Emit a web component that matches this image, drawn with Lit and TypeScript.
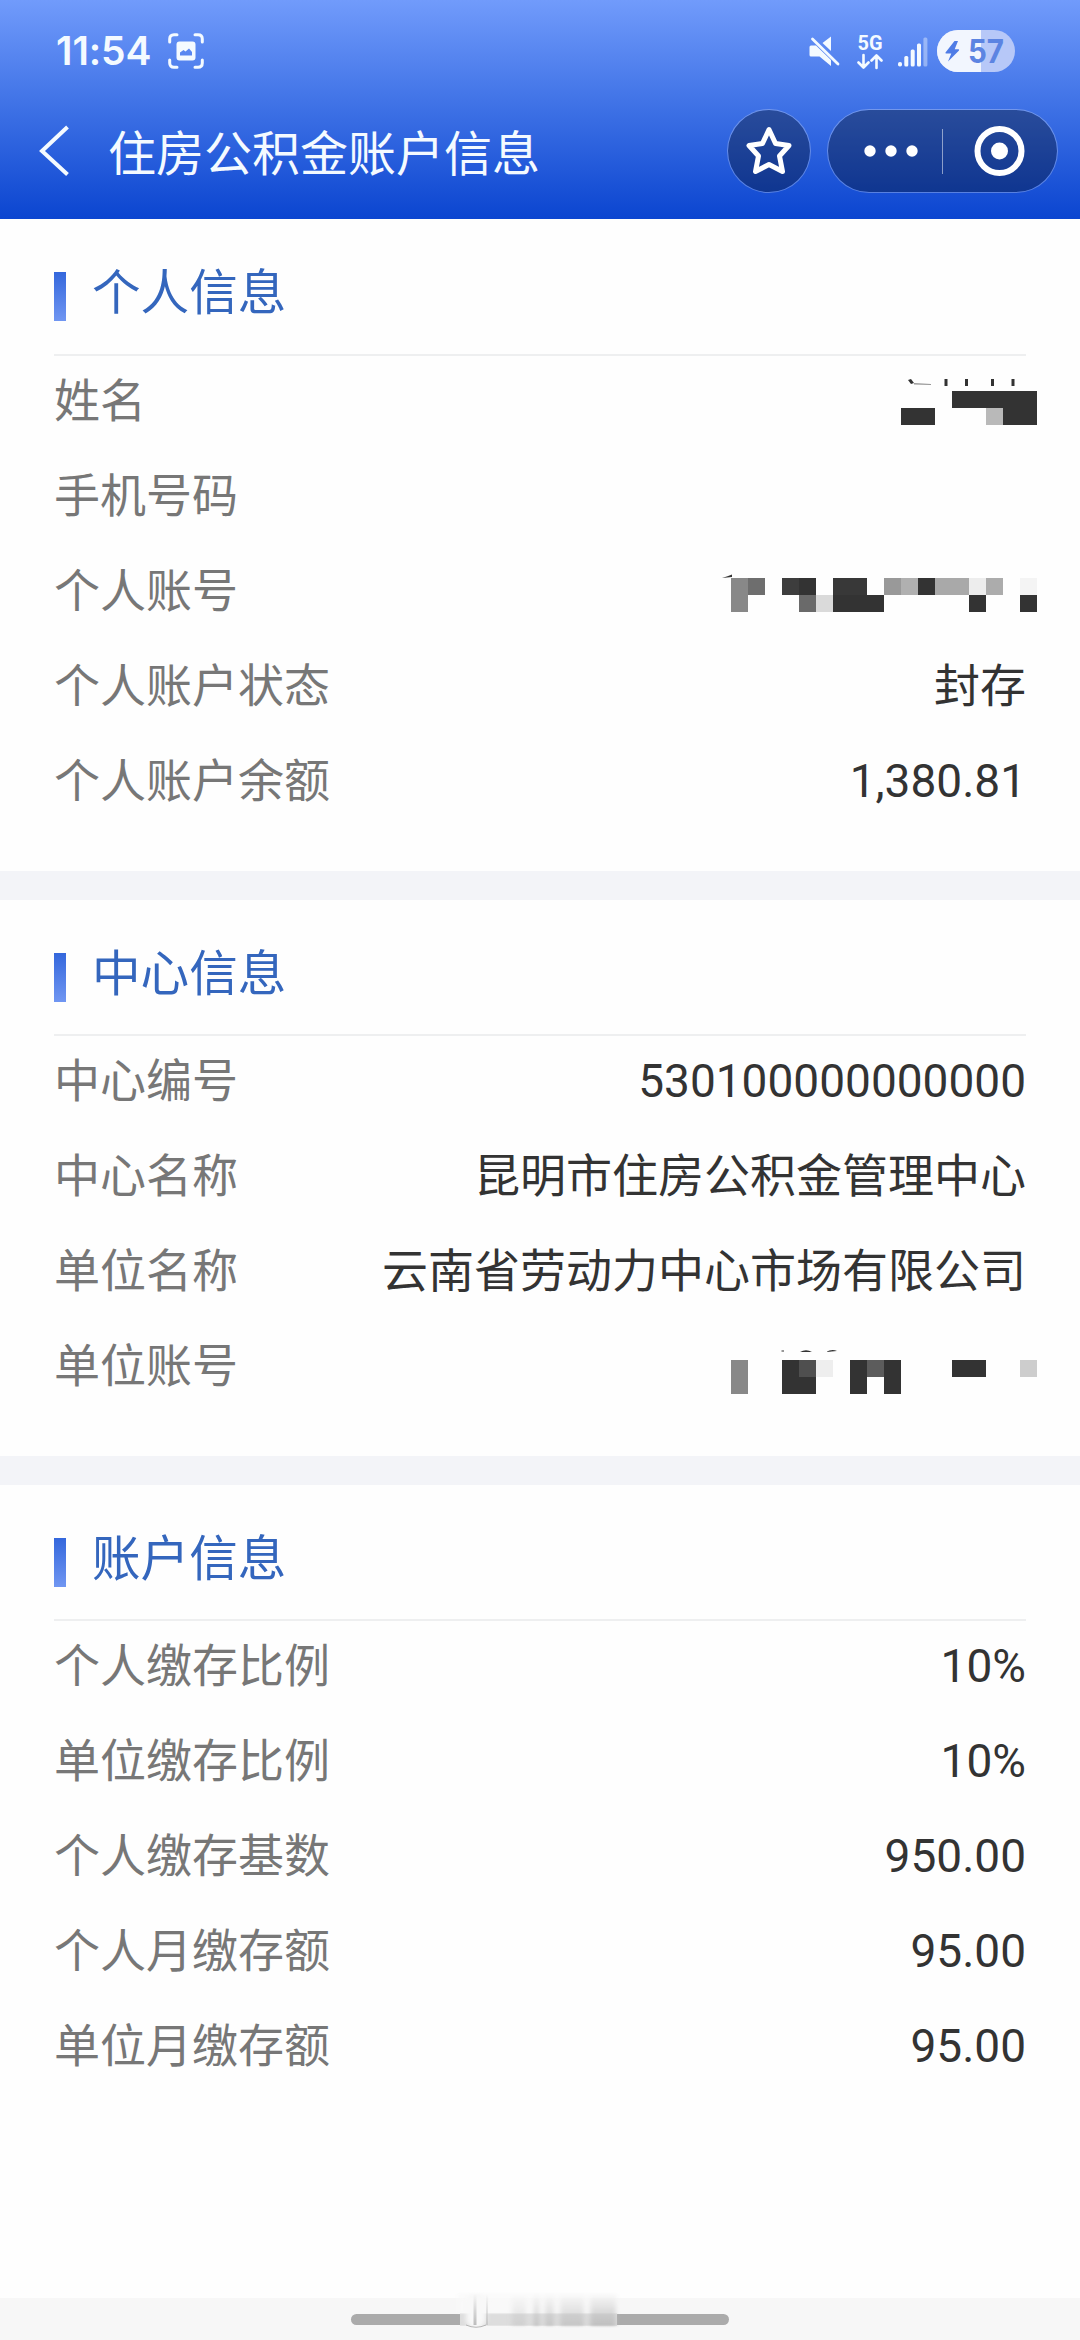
import { LitElement, html, svg, css } from "lit";
import { customElement, property } from "lit/decorators.js";

/** One painted cell: column, row (0 or 1), colour, optional column span and row span. */
type Cell = [number, number, string, number?, number?];

interface Mask {
  cells: Cell[];
  top: number;
  marks: string;
}

interface Row {
  label: string;
  value?: string;
  mask?: Mask;
}

interface Section {
  title: string;
  rows: Row[];
}

const INK = "#333333";

const nameMask: Mask = {
  top: 35,
  cells: [
    [13, 0, INK, 5], [10, 1, INK, 2], [15, 1, "#b9b9b9"], [16, 1, INK, 2],
  ],
  marks:
    "M177 24l3-1 3 4-3 1zM183 27.500l17 .4v.7l-17-.4zM213.500 23h3v7h-3zM234 23h3v7h-3zM260 23h3v7h-3zM280.500 23h3v7h-3z",
};

const accountMask: Mask = {
  top: 32,
  cells: [
    [0, 0, "#888888", 1, 2], [1, 0, "#6e6e6e"], [3, 0, "#3d3d3d"], [4, 0, INK],
    [6, 0, "#383838", 2], [9, 0, "#999999"], [10, 0, "#b0b0b0"], [11, 0, INK],
    [12, 0, "#a9a9a9", 2], [14, 0, "#ededed"], [15, 0, "#acacac"], [17, 0, "#f4f4f4"],
    [4, 1, "#6a6a6a"], [5, 1, "#dadada"], [6, 1, INK, 3], [14, 1, INK], [17, 1, INK],
  ],
  marks: "M-9 32q6-2 10-3.500v2.500z",
};

const unitMask: Mask = {
  top: 39,
  cells: [
    [0, 0, "#888888", 1, 2], [3, 0, INK, 1, 2], [4, 0, "#4f4f4f"], [4, 1, INK],
    [5, 0, "#eeeeee"], [7, 0, INK, 1, 2], [8, 0, "#5c5c5c"], [9, 0, INK, 1, 2],
    [13, 0, INK, 2], [17, 0, "#cdcdcd"],
  ],
  marks: "M50.500 29.500h2.500v1h-2.500zM69 31q6-3.500 12 0zM95 31q6-3.500 11-1z",
};

const sections: Section[] = [
  {
    title: "个人信息",
    rows: [
      { label: "姓名", mask: nameMask },
      { label: "手机号码" },
      { label: "个人账号", mask: accountMask },
      { label: "个人账户状态", value: "封存" },
      { label: "个人账户余额", value: "1,380.81" },
    ],
  },
  {
    title: "中心信息",
    rows: [
      { label: "中心编号", value: "530100000000000" },
      { label: "中心名称", value: "昆明市住房公积金管理中心" },
      { label: "单位名称", value: "云南省劳动力中心市场有限公司" },
      { label: "单位账号", mask: unitMask },
    ],
  },
  {
    title: "账户信息",
    rows: [
      { label: "个人缴存比例", value: "10%" },
      { label: "单位缴存比例", value: "10%" },
      { label: "个人缴存基数", value: "950.00" },
      { label: "个人月缴存额", value: "95.00" },
      { label: "单位月缴存额", value: "95.00" },
    ],
  },
];

@customElement("status-bar")
export class StatusBar extends LitElement {
  static styles = css`
    :host {
      display: flex;
      align-items: center;
      height: 102px;
      padding: 0 65px 0 56px;
      box-sizing: border-box;
      color: #f4faff;
    }
    .time {
      font: 600 39px/48px Inter, sans-serif;
      letter-spacing: -0.1px;
      width: 112px;
      white-space: nowrap;
    }
    .spacer {
      flex: 1;
    }
    svg {
      display: block;
      flex: none;
    }
    .mute {
      margin-right: 16px;
    }
    .network {
      margin-right: 14px;
    }
    .signal {
      margin-right: 9px;
    }
  `;

  render() {
    return html`
      <span class="time">11:54</span>
      <svg width="36" height="36" viewBox="0 0 36 36" fill="none" stroke="#f4faff" stroke-width="3" stroke-linecap="round">
        <path d="M1.700 9V6q0-4.300 4.300-4.300h3M27 1.700h3q4.300 0 4.300 4.300v3M34.300 27v3q0 4.300-4.300 4.300h-3M9 34.300H6Q1.700 34.300 1.700 30v-3" />
        <path fill="#f4faff" stroke="none" fill-rule="evenodd"
          d="M11.500 8.500h13q3 0 3 3v13q0 3-3 3h-13q-3 0-3-3v-13q0-3 3-3zM12 22.500h12v-3.500l-3-3.500-3.500 3-2-1.500-3.500 2.500z" />
      </svg>
      <span class="spacer"></span>
      <svg class="mute" width="32" height="32" viewBox="0 0 32 32" fill="#f4faff">
        <path d="M22 1.500v14.500L13.500 8zM2 10.500h5L22 25v6L10.500 21.500H2Q.5 21.500.5 20v-8Q.5 10.500 2 10.500z" />
        <path d="M3.500 4L29 29" stroke="#f4faff" stroke-width="2.800" stroke-linecap="round" />
      </svg>
      <svg class="network" width="26" height="38" viewBox="0 0 26 38">
        <text x="0.500" y="17.500" textLength="25" lengthAdjust="spacingAndGlyphs"
          font-family="Roboto, sans-serif" font-weight="700" font-size="20.500" fill="#f4faff">5G</text>
        <path d="M6.500 23v12M1.500 30.500l5 5 5-5M19.500 36V24M14.500 28.500l5-5 5 5" fill="none" stroke="#f4faff"
          stroke-width="2.600" stroke-linecap="round" stroke-linejoin="round" />
      </svg>
      <svg class="signal" width="31" height="32" viewBox="0 0 31 32" fill="#f4faff">
        <rect x="1" y="27" width="4" height="4.500" rx="1.800" />
        <rect x="7.300" y="21" width="4" height="10.500" rx="1.500" />
        <rect x="13.700" y="14.500" width="4" height="17" rx="1.500" />
        <rect x="20" y="8.500" width="4" height="23" rx="1.500" />
        <rect x="26.400" y="2.500" width="4" height="29" rx="1.500" opacity="0.400" />
      </svg>
      <svg width="78" height="42" viewBox="0 0 78 42">
        <rect width="78" height="42" rx="21" fill="#b7c8f8" />
        <path d="M21 0h23v42H21A21 21 0 0 1 21 0z" fill="#f2f6fe" />
        <path d="M17.500 11L8.500 22.500q-.5 1 .8 1h5l-3.300 8L22 20.500q.6-1.200-.8-1.200h-3.500l3.300-8.300z" fill="#4f7ce6" />
        <text x="31" y="32.500" textLength="36" lengthAdjust="spacingAndGlyphs" font-family="Inter, sans-serif"
          font-weight="700" font-size="32" fill="#5c84e2">57</text>
      </svg>
    `;
  }
}

@customElement("nav-bar")
export class NavBar extends LitElement {
  @property() heading = "";

  static styles = css`
    :host {
      display: flex;
      align-items: center;
      height: 98px;
      padding: 0 22px 0 36px;
      box-sizing: border-box;
      color: #f4faff;
    }
    svg {
      display: block;
      flex: none;
    }
    .heading {
      flex: 1;
      margin: 0 0 0 36px;
      font: 400 48px/72px "Noto Sans CJK SC", sans-serif;
      white-space: nowrap;
      padding-bottom: 2px;
    }
    .round,
    .capsule {
      display: flex;
      align-items: center;
      justify-content: center;
      height: 84px;
      box-sizing: border-box;
      border: 1px solid rgba(255, 255, 255, 0.28);
      background: rgba(0, 0, 0, 0.32);
      background-clip: padding-box;
      border-radius: 42px;
    }
    .round {
      width: 84px;
      margin-right: 16px;
    }
    .capsule {
      width: 231px;
    }
  `;

  render() {
    return html`
      <svg width="36" height="52" viewBox="0 0 36 52" fill="none" stroke="#f4faff" stroke-width="4">
        <path d="M31.500 2L6 26l25.500 23.500" />
      </svg>
      <h1 class="heading">${this.heading}</h1>
      <div class="round">
        <svg width="50" height="52" viewBox="0 0 50 52" fill="none" stroke="#ffffff" stroke-width="5" stroke-linejoin="round">
          <path d="M25 4.500L31.500 18.500 45 20.500 35.500 31 38.500 46.500 25 39.500 11.500 46.500 14.500 31 5 20.500 18.500 18.500z" />
        </svg>
      </div>
      <div class="capsule">
        <svg width="229" height="82" viewBox="0 0 229 82" fill="#ffffff">
          <circle cx="42" cy="41" r="5.700" />
          <circle cx="63" cy="41" r="5.700" />
          <circle cx="84" cy="41" r="5.700" />
          <rect x="114" y="19" width="1" height="45" opacity="0.500" />
          <circle cx="171.500" cy="41" r="22" fill="none" stroke="#ffffff" stroke-width="6" />
          <circle cx="171.500" cy="41" r="8.500" />
        </svg>
      </div>
    `;
  }
}

@customElement("info-row")
export class InfoRow extends LitElement {
  @property({ attribute: false }) row!: Row;

  static styles = css`
    :host {
      display: flex;
      justify-content: space-between;
      height: 95px;
      font: 400 46px/91px Roboto, "Noto Sans CJK SC", sans-serif;
      white-space: nowrap;
    }
    .label {
      color: #777777;
    }
    .value {
      color: #333333;
    }
    .mask {
      display: block;
      margin-right: -12px;
      overflow: visible;
    }
  `;

  render() {
    const { label, value, mask } = this.row;
    return html`
      <span class="label">${label}</span>
      ${value ? html`<span class="value">${value}</span>` : null}
      ${mask
        ? html`<svg class="mask" width="307" height="95" viewBox="0 0 307 95">
            ${mask.cells.map(
              ([col, line, fill, cols = 1, lines = 1]) => svg`<rect
                x=${col * 17} y=${mask.top + line * 17}
                width=${cols * 17} height=${lines * 17} fill=${fill} shape-rendering="crispEdges"></rect>`,
            )}
            <path d=${mask.marks} fill="#333333" />
          </svg>`
        : null}
    `;
  }
}

@customElement("info-section")
export class InfoSection extends LitElement {
  @property({ attribute: false }) section!: Section;

  static styles = css`
    :host {
      display: block;
      padding: 0 54px 40px;
      background: #fefefe;
    }
    .head {
      display: flex;
      align-items: flex-start;
      gap: 26px;
      height: 134px;
      border-bottom: 2px solid #eeeff0;
    }
    :host(:first-child) .head {
      height: 135px;
    }
    .bar {
      width: 12px;
      height: 49px;
      margin-top: 53px;
      background: linear-gradient(#3467dc, #7096f2);
    }
    .title {
      margin: 34px 0 0;
      font: 400 48.6px/72px "Noto Sans CJK SC", sans-serif;
      color: #3466bd;
    }
  `;

  render() {
    return html`
      <div class="head">
        <span class="bar"></span>
        <h2 class="title">${this.section.title}</h2>
      </div>
      ${this.section.rows.map((row) => html`<info-row .row=${row}></info-row>`)}
    `;
  }
}

@customElement("gesture-bar")
export class GestureBar extends LitElement {
  static styles = css`
    :host {
      display: flex;
      justify-content: center;
      height: 42px;
      background: #f7f7f7;
    }
    svg {
      display: block;
      overflow: visible;
    }
  `;

  render() {
    return html`
      <svg width="378" height="42" viewBox="0 0 378 42">
        <defs>
          <filter id="soft" x="-10%" y="-20%" width="120%" height="140%">
            <feGaussianBlur stdDeviation="2.500 1" />
          </filter>
          <linearGradient id="fade" x1="0" y1="0" x2="0" y2="1">
            <stop offset="0" stop-color="#bcbcbc" stop-opacity="0" />
            <stop offset="1" stop-color="#bcbcbc" />
          </linearGradient>
        </defs>
        <rect y="16" width="378" height="11" rx="5.500" fill="#ababab" />
        <rect x="109" y="15" width="157" height="13" fill="#e2e2e2" opacity="0.900" />
        <g filter="url(#soft)">
          <rect x="107" y="-5" width="159" height="20" fill="#fafafa" opacity="0.700" />
          <rect x="115" y="-4" width="20" height="33" rx="8" fill="#f8f8f8" />
          <rect x="161" y="-4" width="14" height="32" fill="url(#fade)" opacity="0.400" />
          <rect x="183" y="-4" width="5" height="32" fill="url(#fade)" opacity="0.900" />
          <rect x="194" y="-4" width="9" height="32" fill="url(#fade)" opacity="0.700" />
          <rect x="209" y="-4" width="24" height="32" fill="url(#fade)" opacity="0.700" />
          <rect x="239" y="-4" width="26" height="32" fill="url(#fade)" opacity="0.900" />
        </g>
        <rect x="122.500" y="-4" width="3" height="31" fill="url(#fade)" />
        <rect x="135" y="-4" width="2" height="31" fill="url(#fade)" opacity="0.700" />
        <path d="M115 27q10 4.500 20 0" fill="none" stroke="#b5b5b5" />
      </svg>
    `;
  }
}

@customElement("app-root")
export class AppRoot extends LitElement {
  static styles = css`
    :host {
      display: flex;
      flex-direction: column;
      width: 1080px;
      height: 2340px;
      overflow: hidden;
      background: #fefefe;
    }
    .top {
      height: 219px;
      flex: none;
      background: linear-gradient(#719bfb 0%, #3f72e6 48%, #0b45d0 100%);
    }
    .content {
      flex: 1;
      display: flex;
      flex-direction: column;
      gap: 29px;
      background: #f3f4f8;
    }
    .content > :last-child {
      flex: 1;
    }
  `;

  render() {
    return html`
      <header class="top">
        <status-bar></status-bar>
        <nav-bar heading="住房公积金账户信息"></nav-bar>
      </header>
      <main class="content">
        ${sections.map((section) => html`<info-section .section=${section}></info-section>`)}
      </main>
      <gesture-bar></gesture-bar>
    `;
  }
}
